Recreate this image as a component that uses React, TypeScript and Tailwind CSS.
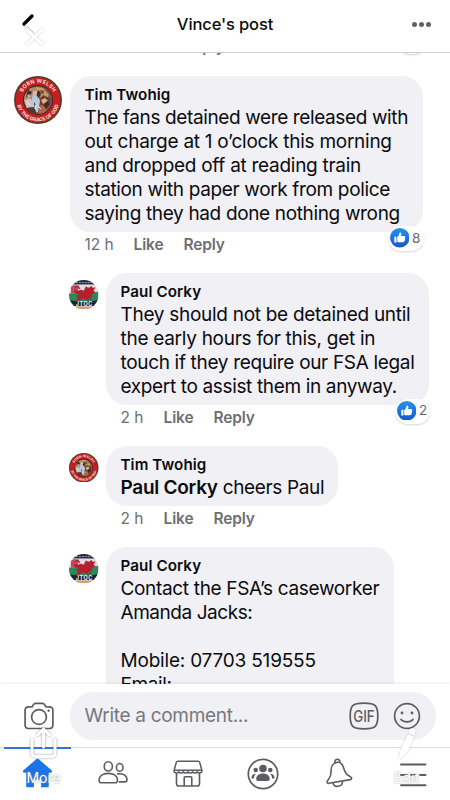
import type { ReactNode } from 'react';

type AvatarProps = { size: string };

function CrestAvatar({ size }: AvatarProps) {
  return (
    <svg viewBox="0 0 48 48" className={`${size} shrink-0`}>
      <defs>
        <path id="crest-top" d="M6.800 24a17.200 17.200 0 0 1 34.400 0" />
        <path id="crest-bottom" d="M2.700 24a21.300 21.300 0 0 0 42.600 0" />
        <clipPath id="crest-photo"><circle cx="24" cy="24" r="14" /></clipPath>
      </defs>
      <circle cx="24" cy="24" r="24" fill="#5a3a28" />
      <circle cx="24" cy="24" r="22.4" fill="#c42024" />
      <circle cx="24" cy="24" r="15" fill="#3f2420" />
      <g clipPath="url(#crest-photo)">
        <rect x="9" y="9" width="30" height="30" fill="#7d5a48" />
        <path d="M10 20l6-8 8-1 2 6-8 5-8 2z" fill="#a98b72" />
        <path d="M22 11l7 1 6 7-3 4-7-3z" fill="#c79a68" />
        <path d="M29 19l8 4-2 6-7 3-3-7z" fill="#6d3a30" />
        <path d="M19 18l5 2 2 5-2 11-6 2-2-9z" fill="#b9c6de" />
        <path d="M10 24l7-2 1 8-5 3z" fill="#cdc3c4" />
        <path d="M12 32l8-1 3 7h-8z" fill="#54362f" />
        <path d="M27 24l4-2 3 3-5 3z" fill="#d8b078" />
        <path d="M25 29l8 1-2 8-6 1z" fill="#b3663f" />
        <path d="M14 14l4 2-2 4-4 1zM25 14l2 5-3 3-2-5zM33 25l3 3-4 5-2-3z" fill="#3c2b2c" />
        <path d="M20 25l2 3-1 5M24 30l3 3M13 26l3 3" stroke="#f1eef0" strokeWidth="1" />
        <circle cx="21" cy="17" r="2.2" fill="#e2b699" />
        <circle cx="15" cy="20" r="1.8" fill="#d5a78c" />
        <circle cx="28" cy="16" r="2" fill="#7b4c38" />
      </g>
      <g fill="#f8e2dc" fontWeight="700" fontFamily="Inter, sans-serif">
        <text textAnchor="middle" fontSize="5.2" letterSpacing="0.3"><textPath href="#crest-top" startOffset="50%">BORN WELSH</textPath></text>
        <text textAnchor="middle" fontSize="4.9"><textPath href="#crest-bottom" startOffset="50%">BY THE GRACE OF GOD</textPath></text>
      </g>
    </svg>
  );
}

function FlagAvatar({ size }: AvatarProps) {
  return (
    <svg viewBox="0 0 30 30" className={`${size} shrink-0`}>
      <defs><clipPath id="flag-round"><circle cx="15" cy="15" r="15" /></clipPath></defs>
      <g clipPath="url(#flag-round)">
        <rect width="30" height="30" fill="#e6d8de" />
        <rect width="30" height="4.500" fill="#232a3f" />
        <path d="M7 2.600h16" stroke="#9aa3b5" strokeWidth="1" strokeDasharray="2 1" />
        <path d="M2 6l5-1 3 3-2 5-6 1z" fill="#c8485a" />
        <path d="M0 14l9-1 5 1.500L30 12v11H0z" fill="#2a8a5a" />
        <path d="M5 10l4 1 3-1 3 1 2-4.500 3 1.500 3-2 1 2 3-.5-2 3 2 2.500-4 1.500 1 4-3-1.500-1.500 1.500 1 2.500-4-1.500-3-.5-3.500 1.500-3 .5 2-3-2-2 3-1.500-4-1.500z" fill="#b5202f" />
        <path d="M6 8l3-2 2 3M12 18l-3 3M19.500 17l3 3.500" stroke="#8e2c3a" strokeWidth="1.200" fill="none" />
        <path d="M0 20.500l15 2 15-2v6H0z" fill="#17233b" />
        <text x="15.500" y="26.400" textAnchor="middle" fontSize="5.600" fontWeight="700" fontFamily="Inter, sans-serif" fill="#eef1f4" letterSpacing="0.500">JTOC</text>
        <path d="M3 27h24v3H3z" fill="#d3a273" />
      </g>
    </svg>
  );
}

function Reactions({ count, place }: { count: string; place: string }) {
  return (
    <div className={`absolute flex h-[25px] items-center rounded-full bg-white pb-[1px] pl-[2px] shadow-[0_1px_2px_rgba(0,0,0,0.16)] ${place}`}>
      <svg viewBox="0 0 20 20" className="size-[19.5px]">
        <defs><linearGradient id="like-blue" x2="0" y2="1"><stop stopColor="#2393ee" /><stop offset="1" stopColor="#1556d4" /></linearGradient></defs>
        <circle cx="10" cy="10" r="10" fill="url(#like-blue)" />
        <path d="M4.400 9.100h2.200v5.700H4.400zM7.400 9.200c1.400-.7 2-1.900 2.200-4 .1-.8 1.700-.7 2 .6.2.9 0 1.800-.3 2.500h3.200c1.300 0 1.500 1.300.8 1.800.5.5.4 1.300-.1 1.600.3.6.1 1.200-.5 1.500.2.9-.4 1.500-1.300 1.500H9.800c-1 0-1.700-.2-2.400-.6z" fill="#fff" />
      </svg>
      <span className="ml-[3px] text-[13.5px] text-[#65676b]">{count}</span>
    </div>
  );
}

function Actions({ time, wide }: { time: string; wide?: boolean }) {
  return (
    <div className="flex h-[41px] pl-[14.5px] pt-[2.5px] text-[15.5px] leading-5 text-[#6d6e73]">
      <span className={wide ? 'w-[49px]' : 'w-[43px]'}>{time}</span>
      <span className="w-[50px] font-semibold tracking-[-0.1px]">Like</span>
      <span className="font-semibold tracking-[-0.15px]">Reply</span>
    </div>
  );
}

type CommentProps = {
  name: string;
  avatar: ReactNode;
  nested?: boolean;
  width: string;
  time: string;
  children: ReactNode;
  reactions?: ReactNode;
};

function Comment({ name, avatar, nested, width, time, children, reactions }: CommentProps) {
  return (
    <div className={nested ? 'flex pl-[69px]' : 'flex pl-[14px]'}>
      <div className={nested ? 'w-[37px] shrink-0 pt-[6.5px]' : 'w-[56px] shrink-0'}>{avatar}</div>
      <div>
        <div className={`relative rounded-[21px] bg-[#f0f0f5] pb-[6px] pl-[14.5px] pt-[9px] ${width}`}>
          <div className="h-[21px] text-[15.2px] font-semibold leading-[20px] tracking-[0.08px] text-[#0b0b0e]">{name}</div>
          <div className="whitespace-nowrap text-[19px] leading-6 text-[#0b0b0e]">{children}</div>
          {reactions}
        </div>
        <Actions time={time} wide={!nested} />
      </div>
    </div>
  );
}

function Line({ track, children }: { track?: string; children?: ReactNode }) {
  return <p className={`h-6 ${track ?? ''}`}>{children}</p>;
}

export default function App() {
  return (
    <div className="flex h-[800px] w-[450px] flex-col overflow-hidden bg-white font-['Inter','Liberation_Sans',sans-serif]">
      <header className="relative flex h-[53px] shrink-0 items-center justify-center border-b border-[#cfcfd2] bg-white pb-1">
        <svg viewBox="0 0 32 40" className="absolute left-[18px] top-[10px] h-10 w-8" fill="none" strokeLinecap="round">
          <path d="M14 6L6 14" stroke="#050505" strokeWidth="3.4" />
          <path d="M5.500 16l8 8M7.500 14.500l8 8" stroke="#a0a0a0" strokeWidth="0.600" strokeDasharray="1.500 0.600" />
          <g className="[filter:drop-shadow(0_0.5px_1px_rgba(0,0,0,0.22))]">
            <path d="M9 20l15 14M24 20L9 34" stroke="#fff" strokeWidth="3" />
          </g>
        </svg>
        <h1 className="text-[16.5px] font-medium tracking-[-0.12px] text-[#0b0b0e]">Vince's post</h1>
        <div className="absolute right-[19px] top-[21.5px] flex gap-[2px]">
          <i className="size-[5px] rounded-full bg-[#606166]" />
          <i className="size-[5px] rounded-full bg-[#606166]" />
          <i className="size-[5px] rounded-full bg-[#606166]" />
        </div>
      </header>

      <main className="min-h-0 flex-1 overflow-hidden">
        <div className="relative -mt-[19px] mb-px pl-[70px]">
          <Actions time="12 h" wide />
          <div className="absolute left-[398px] top-[-5px] h-[25px] w-[28px] rounded-full bg-white shadow-[0_1px_2px_rgba(0,0,0,0.2)]" />
        </div>
        <Comment
          name="Tim Twohig"
          avatar={<CrestAvatar size="size-[48px]" />}
          width="w-[353px]"
          time="12 h"
          reactions={<Reactions count="8" place="right-[-1px] -bottom-[19px] w-[36.5px]" />}
        >
          <Line track="tracking-[-0.38px]">The fans detained were released with</Line>
          <Line track="tracking-[-0.27px]">out charge at 1 o’clock this morning</Line>
          <Line track="tracking-[-0.28px]">and dropped off at reading train</Line>
          <Line track="tracking-[-0.35px]">station with paper work from police</Line>
          <Line track="tracking-[-0.35px]">saying they had done nothing wrong</Line>
        </Comment>
        <Comment
          nested
          name="Paul Corky"
          avatar={<FlagAvatar size="size-[29.5px]" />}
          width="w-[323px]"
          time="2 h"
          reactions={<Reactions count="2" place="right-[-1px] -bottom-[18.5px] w-[35.5px]" />}
        >
          <Line track="tracking-[-0.29px]">They should not be detained until</Line>
          <Line track="tracking-[-0.28px]">the early hours for this, get in</Line>
          <Line track="tracking-[-0.33px]">touch if they require our FSA legal</Line>
          <Line track="tracking-[-0.35px]">expert to assist them in anyway.</Line>
        </Comment>
        <Comment nested name="Tim Twohig" avatar={<CrestAvatar size="size-[29.5px]" />} width="w-[232px]" time="2 h">
          <Line track="tracking-[-0.35px]"><b className="font-semibold tracking-[-0.27px]">Paul Corky</b> cheers Paul</Line>
        </Comment>
        <Comment nested name="Paul Corky" avatar={<FlagAvatar size="size-[29.5px]" />} width="w-[288px]" time="2 h">
          <Line track="tracking-[-0.33px]">Contact the FSA’s caseworker</Line>
          <Line track="tracking-[-0.45px]">Amanda Jacks:</Line>
          <Line />
          <Line track="tracking-[-0.2px]">Mobile: 07703 519555</Line>
          <Line track="tracking-[-0.4px]">Email:</Line>
        </Comment>
      </main>

      <footer className="relative z-10 h-[116px] shrink-0 bg-white shadow-[0_-1px_3px_rgba(0,0,0,0.08)]">
        <div className="flex h-[64px] items-center border-b border-[#dcdce0]">
          <svg viewBox="0 0 30 28" className="ml-[23.5px] h-7 w-[30px]" fill="none" stroke="#5c5d62" strokeWidth="1.7">
            <path d="M8.300 4.700L9.600 2.400C10 1.700 10.500 1.300 11.400 1.300h7.200c.9 0 1.400.4 1.800 1.100l1.300 2.300c2.800.1 4.800.2 5.900.8.900.5 1.300 1.400 1.300 2.600v15c0 2-.9 3.400-3.200 3.400H4.300c-2.300 0-3.200-1.400-3.200-3.400v-15c0-1.200.4-2.100 1.300-2.600 1.100-.6 3.100-.7 5.900-.8z" />
            <circle cx="15" cy="15" r="7.4" />
            <circle cx="24.6" cy="8.7" r=".8" fill="#5c5d62" strokeWidth="1" />
          </svg>
          <div className="ml-4 flex h-[48px] w-[366px] items-center rounded-full bg-[#f0f0f5] pl-[15px]">
            <span className="w-[264px] pt-[2px] text-[19px] tracking-[-0.3px] text-[#77787d]">Write a comment...</span>
            <svg viewBox="0 0 30 28" className="h-7 w-[30px]" fill="none" stroke="#5c5d62" strokeWidth="1.7">
              <path d="M1.200 14c0-10.500 2.300-12.800 13.800-12.800S28.800 3.500 28.800 14 26.500 26.800 15 26.800 1.200 24.500 1.200 14z" />
              <text x="15" y="19.6" textAnchor="middle" fontSize="15.8" fontWeight="500" stroke="none" fill="#5c5d62" textLength="21.5" lengthAdjust="spacingAndGlyphs">GIF</text>
            </svg>
            <svg viewBox="0 0 28 28" className="ml-[14px] size-7" fill="none" stroke="#5c5d62" strokeWidth="1.7" strokeLinecap="round">
              <circle cx="14" cy="14" r="12.4" />
              <path d="M8 17.500c2.600 3.200 9.400 3.200 12 0" />
              <circle cx="9" cy="11" r=".8" fill="#5c5d62" strokeWidth="1.2" />
              <circle cx="19" cy="11" r=".8" fill="#5c5d62" strokeWidth="1.2" />
            </svg>
          </div>
        </div>

        <nav className="-mt-px grid grid-cols-6 items-start">
          <div className="ml-[4px] flex h-[53px] w-[67px] justify-center border-t-2 border-[#2f74dc]">
            <svg viewBox="0 0 30 30" className="mt-[8px] size-[31px]" fill="#1b74e8">
              <path d="M13.700 2.200c.8-.7 1.800-.7 2.600 0l12.300 10.700c1 .9.600 2.300-.8 2.300h-1.900v13.300c0 .5-.3.800-.8.800h-6.600v-7.500h-7v7.500H4.900c-.5 0-.8-.3-.8-.8V15.200H2.200c-1.400 0-1.800-1.400-.8-2.300z" />
            </svg>
          </div>
          <div className="flex justify-center pt-[12px]">
            <svg viewBox="0 0 30 28" className="h-7 w-[30px]" fill="none" stroke="#5c5d62" strokeWidth="1.6">
              <ellipse cx="10.3" cy="7.4" rx="4.1" ry="4.6" />
              <path d="M1.100 21.500c0-4.600 4-7.100 9.200-7.100s9.200 2.500 9.200 7.100c0 1.600-.9 2.300-2.500 2.300H3.600c-1.600 0-2.500-.7-2.500-2.300z" />
              <ellipse cx="21.7" cy="8.4" rx="3.3" ry="3.9" />
              <path d="M19 14.900c5.800-1 10 1.700 10 5.800 0 1.500-.8 2.200-2.300 2.200h-6" />
            </svg>
          </div>
          <div className="flex justify-center pt-[12.5px]">
            <svg viewBox="0 0 30 30" className="h-[29px] w-[30px]" preserveAspectRatio="none" fill="none" stroke="#5c5d62" strokeWidth="1.6" strokeLinejoin="round">
              <path d="M3.300 2.500c.2-.9.700-1.300 1.600-1.300h20.200c.9 0 1.400.4 1.600 1.300l2.200 8.200v1.500c-.5 1.500-3.900 1.600-4.700 0-.9 1.600-3.700 1.600-4.600 0-.9 1.600-3.700 1.600-4.600 0-.9 1.600-3.700 1.600-4.600 0-.9 1.600-3.700 1.600-4.600 0-.8 1.600-4.200 1.500-4.700 0v-1.500zM1.700 10.700h26.600M3.500 13.500v10.700c0 2 .7 2.700 2.700 2.700h17.600c2 0 2.700-.7 2.700-2.700V13.500M11.200 26.500v-8c0-.7.400-1.100 1.100-1.100h5.400c.7 0 1.100.4 1.100 1.100v8" />
            </svg>
          </div>
          <div className="flex justify-center pt-[10.5px]">
            <svg viewBox="0 0 32 32" className="size-8" fill="none">
              <circle cx="16" cy="16" r="14.7" stroke="#5c5d62" strokeWidth="1.7" />
              <g fill="#5c5d62">
                <circle cx="16" cy="10.5" r="3.8" /><circle cx="8.7" cy="12" r="2.3" /><circle cx="23.3" cy="12" r="2.3" />
                <path d="M9.200 21c0-3.400 2.800-5.500 6.800-5.500s6.800 2.100 6.800 5.500c0 1.300-.7 1.900-1.900 1.900h-9.800c-1.200 0-1.900-.6-1.900-1.900zM8.800 15.700c-1.300 1.300-1.900 2.900-1.900 4.900H5.700c-1 0-1.300-.4-1.200-1.300.3-2.300 1.800-3.700 4.300-3.600zM23.200 15.700c1.300 1.300 1.900 2.900 1.900 4.900h1.200c1 0 1.300-.4 1.200-1.300-.3-2.300-1.800-3.700-4.300-3.600z" />
              </g>
            </svg>
          </div>
          <div className="flex justify-center pl-[3px] pt-[11px]">
            <svg viewBox="0 0 30 32" className="h-8 w-[30px]" fill="none" stroke="#5c5d62" strokeWidth="1.6" strokeLinejoin="round">
              <path d="M13.500 4.300c-4.200.7-6.700 4.200-6.400 8.500.2 4.900-.7 6.300-2.700 8.700-1.100 1.300-1.600 2-1.400 2.900.2.800.9 1 1.800.9l21.500-3.700c.9-.2 1.400-.6 1.300-1.400-.1-.9-.8-1.400-2.300-2.200-2.700-1.500-4-2.600-5.400-7.300-1.200-4.200-3.200-6.900-6.400-6.400z" />
              <path d="M11 4.900c-1-4.500 5-4.900 5-.6M9 24.800c1 5 9 4.800 9.600-1.300" />
            </svg>
          </div>
          <div className="flex justify-center pl-[1px] pt-[14.5px]">
            <svg viewBox="0 0 28 26" className="h-[26px] w-7" fill="none" stroke="#5c5d62" strokeWidth="1.9" strokeLinecap="round">
              <path d="M2 2.500h24.500M2 23.300h24.500" />
              <path d="M2 13h24.500" strokeDasharray="6 3.500" />
            </svg>
          </div>
        </nav>

        <div className="absolute left-[22px] top-[42px] flex w-[43px] flex-col items-center">
          <svg viewBox="0 0 32 36" className="h-9 w-8 [filter:drop-shadow(0_0_1px_rgba(60,60,65,0.55))]" fill="none" stroke="#fff" strokeWidth="3" strokeLinecap="round" strokeLinejoin="round">
            <path d="M4 13.500V27c0 2.500 1 3.500 3.500 3.500h16c2.500 0 3.500-1 3.500-3.500V13.500" />
            <path d="M15.500 21V3.500M9.500 9l6-6 6 6" />
          </svg>
          <span className="mt-[7px] text-[14px] leading-[18px] text-white [text-shadow:0_0_2px_#888]">More</span>
        </div>
        <div className="absolute left-[385px] top-[42px] flex w-[43px] flex-col items-center">
          <svg viewBox="0 0 24 36" className="h-9 w-6 [filter:drop-shadow(0_0_1px_rgba(60,60,65,0.25))]" fill="#fff">
            <path d="M15 3.500c1.500-2.500 6-.8 5.600 2L19.500 9.500 13.500 7zM13 8l6 2.500-6 15L5 33c-1.200.8-1.800.3-1.500-1L6 23z" />
          </svg>
          <span className="mt-[7px] text-[14px] leading-[18px] text-white [text-shadow:0_0_2px_#999]">Edit</span>
        </div>
      </footer>
    </div>
  );
}
